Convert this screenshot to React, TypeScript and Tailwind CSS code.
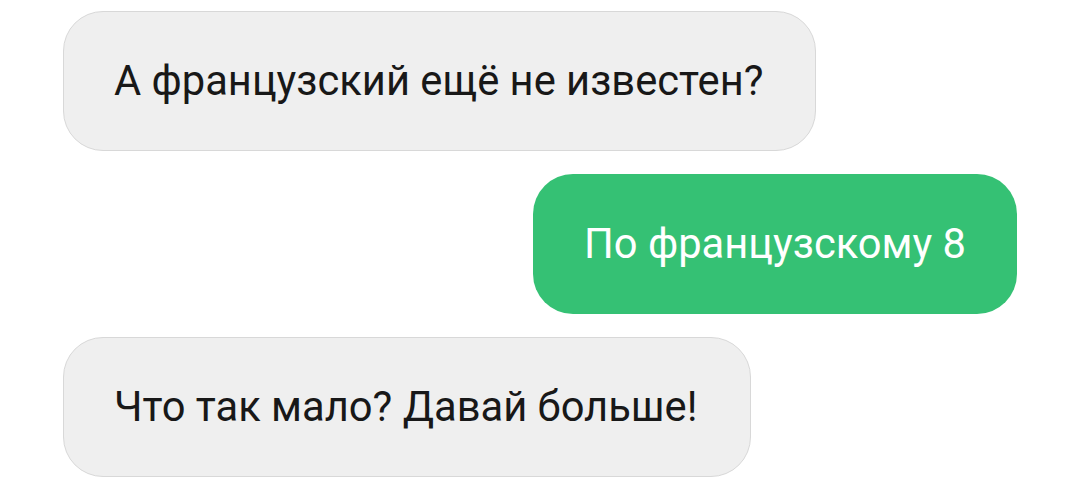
export default function App() {
  return (
    <div
      className="w-[1080px] h-[495px] bg-white flex flex-col gap-[23px] pt-[11px] px-[63px] overflow-hidden"
      style={{ fontFamily: "Roboto, 'Noto Sans', sans-serif" }}
    >
      <div className="self-start h-[140px] flex items-center pl-[50px] pr-[52px] rounded-[40px] bg-[#efefef] border border-[#d8d8d8] text-[#181818] text-[41.7px]">
        А французский ещё не известен?
      </div>
      <div className="self-end h-[140px] flex items-center px-[51px] rounded-[40px] bg-[#35c174] text-white text-[41.7px]">
        По французскому 8
      </div>
      <div className="self-start h-[140px] flex items-center pl-[50px] pr-[53px] rounded-[40px] bg-[#efefef] border border-[#d8d8d8] text-[#181818] text-[41.7px]">
        Что так мало? Давай больше!
      </div>
    </div>
  );
}
